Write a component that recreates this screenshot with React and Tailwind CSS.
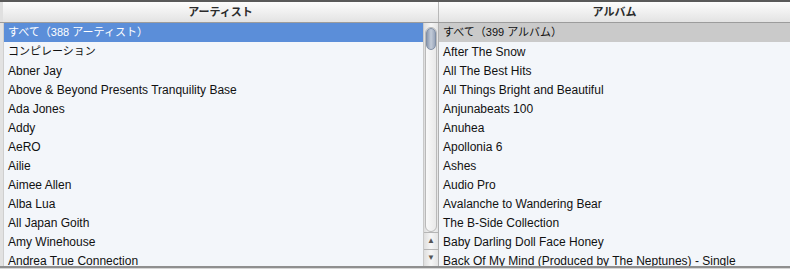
const ARTISTS = [
  'すべて（388 アーティスト）',
  'コンピレーション',
  'Abner Jay',
  'Above & Beyond Presents Tranquility Base',
  'Ada Jones',
  'Addy',
  'AeRO',
  'Ailie',
  'Aimee Allen',
  'Alba Lua',
  'All Japan Goith',
  'Amy Winehouse',
  'Andrea True Connection',
];

const ALBUMS = [
  'すべて（399 アルバム）',
  'After The Snow',
  'All The Best Hits',
  'All Things Bright and Beautiful',
  'Anjunabeats 100',
  'Anuhea',
  'Apollonia 6',
  'Ashes',
  'Audio Pro',
  'Avalanche to Wandering Bear',
  'The B-Side Collection',
  'Baby Darling Doll Face Honey',
  'Back Of My Mind (Produced by The Neptunes) - Single',
];

const FONT = { fontFamily: '"Liberation Sans", "Noto Sans CJK JP", sans-serif' };

// japanese labels render a bit smaller than latin ones in the original
const hasKana = (s) => /[\u3040-\u30ff]/.test(s);

function Row({ text, selected, inactive }) {
  let cls = 'text-[#111]';
  if (selected) cls = 'bg-[#5b8ed9] text-white';
  if (inactive) cls = 'bg-[#cacaca] text-[#111]';
  const size = hasKana(text) ? 'text-[11px]' : 'text-[12px]';
  return (
    <div className={`h-[19px] shrink-0 flex items-center pl-[4px] leading-none whitespace-nowrap ${size} ${cls}`}>
      {text}
    </div>
  );
}

function Scrollbar() {
  return (
    <div className="w-[15px] shrink-0 flex flex-col bg-gradient-to-r from-[#dedede] via-[#f6f6f6] to-[#e4e4e4] border-l border-[#c9c9c9]">
      <div className="flex-1 min-h-0 pt-[4px] px-[1px] pb-0 flex flex-col">
        <div className="flex-1 rounded-full border border-[#b9b9b9] bg-gradient-to-r from-[#f9f9f9] to-[#e9e9e9] flex flex-col">
          <div className="h-[22px] rounded-full bg-gradient-to-r from-[#8d9ab0] via-[#c3ccd9] to-[#9aa6ba] border border-[#8190a6]" />
        </div>
      </div>
      <div className="h-[17px] border-t border-[#b5b5b5] flex items-center justify-center text-[8px] text-[#555] leading-none">▲</div>
      <div className="h-[17px] border-t border-[#b5b5b5] flex items-center justify-center text-[8px] text-[#555] leading-none">▼</div>
    </div>
  );
}

export default function App() {
  return (
    <div className="w-[790px] h-[269px] overflow-hidden flex flex-col bg-[#f3f6fa] border-t-2 border-[#5a5a5a]" style={FONT}>
      {/* column headers */}
      <div className="h-[21px] shrink-0 flex border-b border-[#9c9c9c] bg-gradient-to-b from-[#fdfdfd] to-[#e3e3e3] text-[11px] font-bold text-[#2b2b2b]">
        <div className="w-[439px] shrink-0 flex items-center justify-center border-l-[3px] border-[#e0e0e0] border-r border-r-[#b8b8b8]">
          アーティスト
        </div>
        <div className="flex-1 flex items-center justify-center">アルバム</div>
      </div>

      <div className="flex-1 min-h-0 flex">
        <div className="w-[4px] shrink-0 bg-[#e2e2e2] border-r border-[#cfcfcf]" />
        <div className="w-[419px] shrink-0 flex flex-col overflow-hidden">
          {ARTISTS.map((a, i) => (
            <Row key={a} text={a} selected={i === 0} />
          ))}
        </div>
        <Scrollbar />
        <div className="w-px shrink-0 bg-[#b0b0b0]" />
        <div className="flex-1 flex flex-col overflow-hidden">
          {ALBUMS.map((a, i) => (
            <Row key={a} text={a} inactive={i === 0} />
          ))}
        </div>
      </div>

      <div className="h-[3px] shrink-0 border-t-2 border-[#8f8f8f] bg-[#d6d6d6]" />
    </div>
  );
}
